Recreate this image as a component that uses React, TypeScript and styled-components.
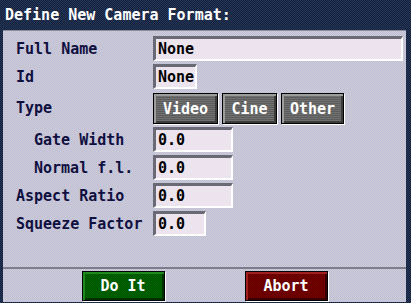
import React from 'react'
import styled, { createGlobalStyle } from 'styled-components'

const GlobalStyle = createGlobalStyle`
  html, body {
    margin: 0;
    padding: 0;
    background: #1c2a44;
  }
`

const mono = `"DejaVu Sans Mono", "Liberation Mono", monospace`

const checker = (a: string, b: string) => `
  background-color: ${a};
  background-image: repeating-conic-gradient(${a} 0 25%, ${b} 0 50%);
  background-size: 2px 2px;
`

const Window = styled.div`
  width: 411px;
  height: 303px;
  display: flex;
  flex-direction: column;
  ${checker('#14203a', '#26385a')}
  font-family: ${mono};
`

const TitleBar = styled.div`
  height: 30px;
  display: flex;
  align-items: center;
  padding-left: 5px;
  color: #ffffff;
  font-size: 15px;
  font-weight: bold;
`

const Panel = styled.div`
  flex: 1;
  margin: 0 5px 1px 3px;
  display: flex;
  flex-direction: column;
  border-top: 1px solid #8c8c98;
  ${checker('#cfcdd6', '#bebdd8')}
`

const Form = styled.div`
  flex: 1;
  display: grid;
  grid-template-columns: 137px 1fr;
  grid-template-rows: 25px 25px 32px 25px 25px 25px 25px;
  row-gap: 3px;
  padding: 5px 0 0 13px;
  align-content: start;
`

const Label = styled.div<{ $indent?: boolean }>`
  display: flex;
  align-items: center;
  padding-left: ${p => (p.$indent ? '18px' : '0')};
  color: #101040;
  font-size: 15px;
  font-weight: bold;
  white-space: pre;
`

const Field = styled.div<{ $w: number }>`
  box-sizing: border-box;
  width: ${p => p.$w}px;
  height: 25px;
  display: flex;
  align-items: center;
  padding-left: 2px;
  border-top: 3px solid #6a6a76;
  border-left: 3px solid #6a6a76;
  border-bottom: 2px solid #ffffff;
  border-right: 2px solid #ffffff;
  ${checker('#f2e6ec', '#e6e2f0')}
  color: #000000;
  font-size: 15px;
  font-weight: bold;
`

const ButtonGroup = styled.div`
  display: flex;
  align-items: flex-end;
  gap: 4px;
`

const ToggleButton = styled.div<{ $w: number }>`
  box-sizing: border-box;
  width: ${p => p.$w}px;
  height: 31px;
  display: flex;
  align-items: center;
  justify-content: center;
  border: 1px solid #000000;
  box-shadow: 1px 1px 0 #ffffff, inset 2px 2px 0 #9c9c9c, inset -2px -2px 0 #3c3c3c;
  background-color: #666666;
  background-image: repeating-linear-gradient(#707070 0 1px, #5c5c5c 1px 2px);
  color: #ffffff;
  font-size: 15px;
  font-weight: bold;
`

const Footer = styled.div`
  box-sizing: border-box;
  height: 35px;
  border-top: 2px solid #7c7c8a;
  padding-top: 2px;
  display: flex;
  justify-content: center;
  gap: 80px;
`

const ActionButton = styled.div<{ $tone: 'go' | 'stop' }>`
  box-sizing: border-box;
  width: 83px;
  height: 30px;
  display: flex;
  align-items: center;
  justify-content: center;
  border: 1px solid #000000;
  box-shadow: 1px 1px 0 #ffffff, inset 2px 2px 0 ${p => (p.$tone === 'go' ? '#1e8a1e' : '#a02020')},
    inset -2px -2px 0 ${p => (p.$tone === 'go' ? '#003000' : '#380000')};
  ${p => (p.$tone === 'go' ? checker('#006400', '#005400') : checker('#760000', '#620000'))}
  color: #ffffff;
  font-size: 15px;
  font-weight: bold;
`

const App = () => {
  return (
    <Window>
      <GlobalStyle />
      <TitleBar>Define New Camera Format:</TitleBar>
      <Panel>
        <Form>
          <Label>Full Name</Label>
          <Field $w={250}>None</Field>
          <Label>Id</Label>
          <Field $w={44}>None</Field>
          <Label>Type</Label>
          <ButtonGroup>
            <ToggleButton $w={65}>Video</ToggleButton>
            <ToggleButton $w={55}>Cine</ToggleButton>
            <ToggleButton $w={63}>Other</ToggleButton>
          </ButtonGroup>
          <Label $indent>Gate Width</Label>
          <Field $w={80}>0.0</Field>
          <Label $indent>Normal f.l.</Label>
          <Field $w={80}>0.0</Field>
          <Label>Aspect Ratio</Label>
          <Field $w={80}>0.0</Field>
          <Label>Squeeze Factor</Label>
          <Field $w={53}>0.0</Field>
        </Form>
        <Footer>
          <ActionButton $tone="go">Do It</ActionButton>
          <ActionButton $tone="stop">Abort</ActionButton>
        </Footer>
      </Panel>
    </Window>
  )
}

export default App
